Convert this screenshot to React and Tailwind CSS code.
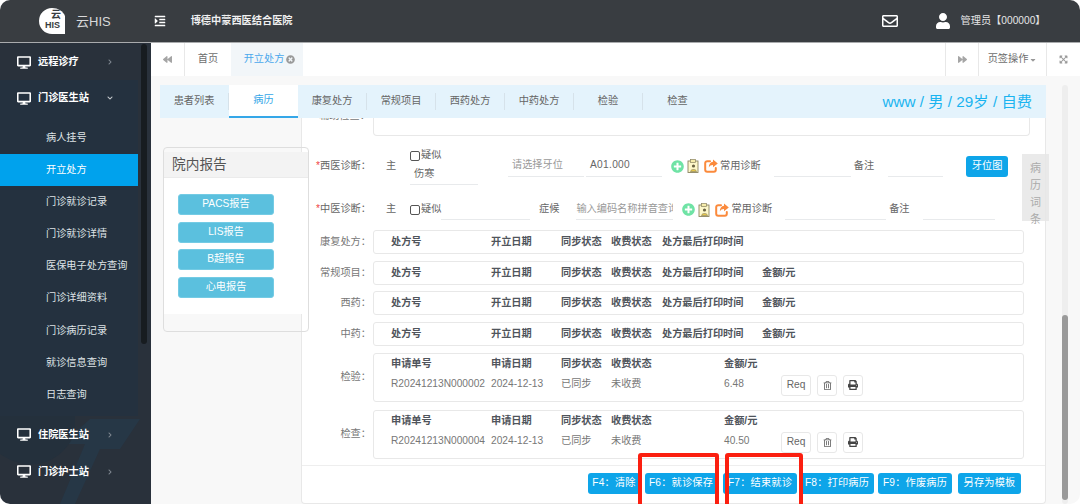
import React from "react";
import {
  FaDesktop, FaChevronRight, FaChevronDown, FaRegEnvelope, FaUser, FaBackward, FaForward,
  FaExpandArrowsAlt, FaTimesCircle, FaPlusCircle, FaRegTrashAlt, FaPrint, FaCaretDown, FaIndent,
} from "react-icons/fa";

const font = { fontFamily: '"Liberation Sans","Noto Sans CJK SC",sans-serif' };

function Logo() {
  return (
    <svg width="28" height="28" viewBox="0 0 28 28" className="shrink-0">
      <path d="M14 1 A13 13 0 1 0 14 27 L27 27 L27 22 L14 22 Z" fill="#fff" />
      <path d="M14 1 C 20 1 25 4 27 9 L27 25 L14 26 Z" fill="#fff" />
      <text x="13" y="11" fontSize="10" fontWeight="700" fill="#393d41" fontFamily="Noto Sans CJK SC">云</text>
      <text x="7" y="21" fontSize="9" fontWeight="700" fill="#393d41" fontFamily="Liberation Sans">HIS</text>
    </svg>
  );
}

function ClipIcon() {
  return (
    <svg width="12" height="14" viewBox="0 0 12 14" className="shrink-0">
      <rect x="1" y="2" width="10" height="11.5" fill="#fdf7c9" stroke="#8a8360" strokeWidth="0.9" />
      <rect x="3.5" y="0.5" width="5" height="3" fill="#f6ecaa" stroke="#8a8360" strokeWidth="0.7" />
      <circle cx="6.5" cy="7" r="1.6" fill="#6a6343" />
      <path d="M3.5 12.5 C3.8 9.8 9.2 9.8 9.5 12.5 Z" fill="#e8c84a" stroke="#6a6343" strokeWidth="0.5" />
    </svg>
  );
}

function ShareIcon() {
  return (
    <svg width="14" height="14" viewBox="0 0 14 14" className="shrink-0">
      <path d="M6 2.2 H3.2 A2 2 0 0 0 1.2 4.2 V10.8 A2 2 0 0 0 3.2 12.8 H9.8 A2 2 0 0 0 11.8 10.8 V9" fill="none" stroke="#fb8a3c" strokeWidth="2" strokeLinecap="round" />
      <path d="M9 0.6 L13.8 4.4 L9 8.2 V6 C7 6 5.6 6.8 4.8 8.6 C4.8 5.4 6.4 3 9 2.8 Z" fill="#fb8a3c" />
    </svg>
  );
}

function IconTrio({ gap1, gap2 }) {
  return (
    <>
      <FaPlusCircle className="text-[13px] text-[#6fe3a5] shrink-0" />
      <span className={gap1}><ClipIcon /></span>
      <span className={gap2}><ShareIcon /></span>
    </>
  );
}

function NavMain({ label, open }) {
  return (
    <div className="flex items-center h-[36px] pl-[17px] text-white font-bold">
      <FaDesktop className="text-[13px] text-white w-[14px]" />
      <span className="ml-[7px] w-[63px]">{label}</span>
      {open ? <FaChevronDown className="text-[6px] text-[#c8ccd0] ml-[6px]" /> : <FaChevronRight className="text-[6px] text-[#7f8790] ml-[6px]" />}
    </div>
  );
}

function Cols({ widths, items, className }) {
  return (
    <div className={`flex items-center ${className}`}>
      {items.map((t, i) => (
        <span key={i} className="shrink-0 whitespace-nowrap" style={{ width: widths[i] }}>{t}</span>
      ))}
    </div>
  );
}

const rxW = [100, 70, 50, 51, 100, 60];
const labW = [100, 70, 50, 113, 57];

function RxCard({ label, cols, mb }) {
  return (
    <div className={`flex items-center ${mb}`}>
      <div className="w-[65px] text-right text-[#777] relative left-[4px] whitespace-nowrap">{label}：</div>
      <div className="ml-[6px] w-[651px] h-[24px] border border-[#e8e8e8] rounded-[3px] pl-[17px] flex items-center">
        <Cols widths={rxW} items={cols} className="font-bold text-[#50555c]" />
      </div>
    </div>
  );
}

function LabCard({ label, no, amount, mb }) {
  return (
    <div className={`flex items-center ${mb}`}>
      <div className="w-[65px] text-right text-[#777] relative left-[4px] whitespace-nowrap">{label}：</div>
      <div className="ml-[6px] w-[651px] h-[49px] border border-[#e8e8e8] rounded-[3px] pl-[17px] pt-[3.5px]">
        <Cols widths={labW} items={["申请单号", "申请日期", "同步状态", "收费状态", "金额/元"]} className="font-bold text-[#50555c] h-[14px]" />
        <div className="flex items-center mt-[3.5px] h-[21px] text-[#777]">
          <Cols widths={labW} items={[no, "2024-12-13", "已同步", "未收费", amount]} className="relative top-[-1px]" />
          <span className="w-[30px] h-[21px] border border-[#e8e8e8] rounded-[3px] flex items-center justify-center text-[#666]">Req</span>
          <span className="w-[20px] h-[21px] ml-[6px] border border-[#e8e8e8] rounded-[3px] flex items-center justify-center text-[#666]"><FaRegTrashAlt className="text-[9px]" /></span>
          <span className="w-[20px] h-[21px] ml-[6px] border border-[#e8e8e8] rounded-[3px] flex items-center justify-center text-[#444]"><FaPrint className="text-[10px]" /></span>
        </div>
      </div>
    </div>
  );
}

function Field({ w, children, className = "" }) {
  return (
    <div className={`h-[21px] border-b border-[#e8eaec] shrink-0 flex items-center overflow-hidden whitespace-nowrap ${className}`} style={{ width: w }}>
      {children}
    </div>
  );
}

function Check() {
  return <span className="inline-block w-[10px] h-[10px] border border-[#555] rounded-[2px] bg-white shrink-0" />;
}

function Action({ children, className }) {
  return (
    <button className={`h-[21px] bg-[#0ea5e9] rounded-[3px] text-white flex items-center justify-center whitespace-nowrap tracking-[0.2px] ${className}`}>
      {children}
    </button>
  );
}

export default function App() {
  const subs = ["患者列表", "病历", "康复处方", "常规项目", "西药处方", "中药处方", "检验", "检查"];
  const navs = ["病人挂号", "开立处方", "门诊就诊记录", "门诊就诊详情", "医保电子处方查询", "门诊详细资料", "门诊病历记录", "就诊信息查询", "日志查询"];
  return (
    <div style={font} className="w-[1080px] h-[504px] relative overflow-hidden rounded-[10px] bg-white text-[10.2px] leading-none flex flex-col">
      {/* header */}
      <header className="h-[43px] shrink-0 bg-[#393d41] border-b border-[#a9abad] flex items-center text-white">
        <div className="ml-[38px] flex items-center"><Logo /></div>
        <span className="ml-[10px] text-[13px] text-[#d8d9da]">云HIS</span>
        <FaIndent className="ml-[43px] text-[12px] text-white" />
        <span className="ml-[25px] font-bold text-[#f0f0f0]">博德中蒙西医结合医院</span>
        <FaRegEnvelope className="ml-[589px] text-[16px] text-white" />
        <FaUser className="ml-[37px] text-[16px] text-white" />
        <span className="ml-[10px] text-[#e6e6e6]">管理员【000000】</span>
      </header>

      <div className="flex flex-1 min-h-0">
        {/* sidebar */}
        <aside className="w-[151px] shrink-0 bg-[#29313b] relative flex overflow-hidden">
          <svg className="absolute left-0 bottom-0" width="151" height="90" viewBox="0 0 151 90">
            <path d="M60 90 L85 30 L62 30 L90 5 L140 5 L120 35 L100 35 L75 90 Z" fill="#263746" />
            <path d="M0 0 L0 40 C 30 60 60 50 75 20 L75 0 Z" fill="#24303c" />
          </svg>
          <nav className="w-[138px] relative">
            <div className="pt-[1px]"><NavMain label="远程诊疗" /></div>
            <div className="bg-[#24313f] pb-[5px]">
              <NavMain label="门诊医生站" open />
              <ul className="pt-[6px]">
                {navs.map((n) => (
                  <li key={n} className={`h-[32.1px] pl-[46px] flex items-center ${n === "开立处方" ? "bg-[#00a2ed] text-white" : "text-[#dfe3e6]"}`}>{n}</li>
                ))}
              </ul>
            </div>
            <div className="mt-[1px]">
              <NavMain label="住院医生站" />
              <div className="h-[1px]" />
              <NavMain label="门诊护士站" />
            </div>
          </nav>
          <div className="ml-[3px] mt-[1px] w-[6px] h-[300px] bg-[#171c20] rounded-full relative" />
        </aside>

        {/* main */}
        <main className="flex-1 min-w-0 flex flex-col bg-[#f8f8f8]">
          <div className="h-[33px] shrink-0 bg-white flex items-stretch text-[#6e6e6e]">
            <div className="w-[34px] border-r border-[#e8e8e8] flex items-center justify-center text-[#a5a5a5]"><FaBackward className="text-[9px]" /></div>
            <div className="w-[46px] flex items-center justify-center">首页</div>
            <div className="w-[72px] bg-[#f2f6f9] flex items-center justify-center text-[#4aa8ec] pl-[5px]">
              开立处方<FaTimesCircle className="ml-[2px] text-[9px] text-[#999]" />
            </div>
            <div className="flex-1" />
            <div className="w-[33px] border-l border-[#e8e8e8] flex items-center justify-center text-[#a5a5a5]"><FaForward className="text-[9px]" /></div>
            <div className="w-[68px] border-l border-[#e8e8e8] flex items-center justify-center">页签操作<FaCaretDown className="ml-[1px] text-[8px] text-[#999]" /></div>
            <div className="w-[34px] border-l border-[#e8e8e8] flex items-center justify-center text-[#999]"><FaExpandArrowsAlt className="text-[9px]" /></div>
          </div>

          <div className="flex-1 min-h-0 flex pt-[9px]">
            <div className="w-[895px] shrink-0 flex flex-col min-h-0">
              {/* sub tabs */}
              <div className="ml-[9px] w-[886px] h-[33px] shrink-0 bg-[#e4f3fc] flex items-center relative z-20 text-[#666]">
                {subs.map((s, i) => (
                  <div key={s} className={`w-[69px] shrink-0 flex items-center justify-center ${i === 1 ? "h-[33px] bg-white text-[#35a7e8] border-b-2 border-[#35a7e8]" : i < 7 ? "h-[17px] border-r border-[#d6e2ea]" : "h-[17px]"}`}>{s}</div>
                ))}
                <div className="flex-1 text-right pr-[14px] text-[15.3px] text-[#1ab4f0] whitespace-nowrap">www / 男 / 29岁 / 自费</div>
              </div>
              <div className="flex flex-1 min-h-0">
                <div className="w-[150px] shrink-0 relative z-10 pl-[12px] pt-[29px]">
                  <div className="w-[146px] h-[185px] border border-[#dedede] rounded-[4px] pt-[4px]">
                    <div className="h-[26px] bg-[#f3f3f3] border-b border-[#ebebeb] pl-[8px] flex items-center text-[13.7px] text-[#555]">院内报告</div>
                    <div className="h-[136px] bg-white flex flex-col gap-[6.5px] pl-[14px] pt-[16px]">
                      {["PACS报告", "LIS报告", "B超报告", "心电报告"].map((t) => (
                        <div key={t} className="w-[96px] h-[21px] bg-[#5bc0de] border border-[#74cbe4] rounded-[3px] text-white flex items-center justify-center">{t}</div>
                      ))}
                    </div>
                  </div>
                </div>

                <section className="w-[745px] shrink-0 bg-white border-r border-b border-l border-[#e8e8e8] rounded-b-[4px] relative flex flex-col text-[#666] overflow-visible">
                  <div className="relative h-[18px] ml-[71px] w-[657px] border-x border-b border-[#e8e8e8] rounded-b-[4px]">
                    <div className="absolute left-[-55px] top-0 w-[50px] h-[3px] overflow-hidden text-[#777] whitespace-nowrap">
                      <span className="block mt-[-7px]">辅助检查：</span>
                    </div>
                  </div>

                  {/* 西医 */}
                  <div className="flex items-center h-[36px] mt-[12px] text-[#666]">
                    <div className="w-[65px] text-right whitespace-nowrap relative left-[4px]"><span className="text-[#ef4444]">*</span>西医诊断：</div>
                    <span className="ml-[19px] w-[24px]">主</span>
                    <div className="w-[68px] shrink-0 relative top-[1px]">
                      <div className="flex items-center h-[13px]"><Check /><span className="ml-[1px]">疑似</span></div>
                      <div className="h-[23px] border-b border-[#e8eaec] flex items-center pl-[4px] pt-[2px]">伤寒</div>
                    </div>
                    <Field w={76} className="ml-[30px] pl-[4px] text-[#999]">请选择牙位</Field>
                    <Field w={76} className="ml-[2px] pl-[4px] text-[#666] tracking-[0.3px]">A01.000</Field>
                    <div className="ml-[9px] flex items-center">
                      <IconTrio gap1="ml-[3px]" gap2="ml-[5px]" />
                      <span className="ml-[2px]">常用诊断</span>
                    </div>
                    <Field w={77} className="ml-[13px]" />
                    <span className="ml-[3px]">备注</span>
                    <Field w={55} className="ml-[14px]" />
                    <button className="ml-[23px] w-[42px] h-[21px] rounded-[3px] bg-[#0ea5e9] text-white">牙位图</button>
                  </div>

                  {/* 中医 */}
                  <div className="flex items-center h-[21px] mt-[15px]">
                    <div className="w-[65px] text-right whitespace-nowrap relative left-[4px]"><span className="text-[#ef4444]">*</span>中医诊断：</div>
                    <span className="ml-[19px] w-[24px]">主</span>
                    <Check /><span className="ml-[1px] w-[20px] shrink-0 whitespace-nowrap">疑似</span>
                    <Field w={89} />
                    <span className="ml-[9px]">症候</span>
                    <Field w={97} className="ml-[17px] text-[#999]">输入编码名称拼音查询</Field>
                    <div className="ml-[9px] flex items-center">
                      <IconTrio gap1="ml-[3px]" gap2="ml-[5px]" />
                      <span className="ml-[2px]">常用诊断</span>
                    </div>
                    <Field w={101} className="ml-[13px]" />
                    <span className="ml-[3px]">备注</span>
                    <Field w={72} className="ml-[13px]" />
                  </div>

                  <div className="mt-[10px]">
                    <RxCard label="康复处方" mb="mb-[6.67px]" cols={["处方号", "开立日期", "同步状态", "收费状态", "处方最后打印时间"]} />
                    <RxCard label="常规项目" mb="mb-[6.67px]" cols={["处方号", "开立日期", "同步状态", "收费状态", "处方最后打印时间", "金额/元"]} />
                    <RxCard label="西药" mb="mb-[6.67px]" cols={["处方号", "开立日期", "同步状态", "收费状态", "处方最后打印时间", "金额/元"]} />
                    <RxCard label="中药" mb="mb-[6.67px]" cols={["处方号", "开立日期", "同步状态", "收费状态", "处方最后打印时间", "金额/元"]} />
                    <LabCard label="检验" no="R20241213N000002" amount="6.48" mb="mb-[8px]" />
                    <LabCard label="检查" no="R20241213N000004" amount="40.50" mb="mb-0" />
                  </div>

                  <div className="mt-[6px] flex-1 border-t border-[#eeeeee] flex items-start justify-end pt-[7px] pr-[24px]">
                    <Action className="w-[52px]">F4：清除</Action>
                    <Action className="w-[72px] ml-[5px]">F6：就诊保存</Action>
                    <Action className="w-[74px] ml-[6px]">F7：结束就诊</Action>
                    <Action className="w-[74px] ml-[3px]">F8：打印病历</Action>
                    <Action className="w-[74px] ml-[4px]">F9：作废病历</Action>
                    <Action className="w-[63px] ml-[6px]">另存为模板</Action>
                  </div>

                  <div className="absolute left-[720px] top-[36px] w-[27px] h-[67px] bg-[#e6e6e6]/85 flex flex-col items-center text-[#aaa] text-[11px] leading-[17px] pt-[6px] z-10">
                    <span>病</span><span>历</span><span>词</span><span>条</span>
                  </div>
                </section>
              </div>
            </div>

            <div className="flex-1 relative flex justify-end pr-[12px]">
              <div className="w-[6px] h-full bg-[#eeeeee] rounded-full flex flex-col justify-end pt-[3px]">
                <div className="h-[185px] mb-[4px] bg-[#9a9a9a] rounded-full" />
              </div>
            </div>
          </div>
        </main>
      </div>

      {/* highlight boxes */}
      <div className="absolute left-[638px] top-[453px] w-[81px] h-[60px] border-[4px] border-[#fb1f10] rounded-[3px] z-20" />
      <div className="absolute left-[725px] top-[453px] w-[78px] h-[60px] border-[4px] border-[#fb1f10] rounded-[3px] z-20" />
    </div>
  );
}
